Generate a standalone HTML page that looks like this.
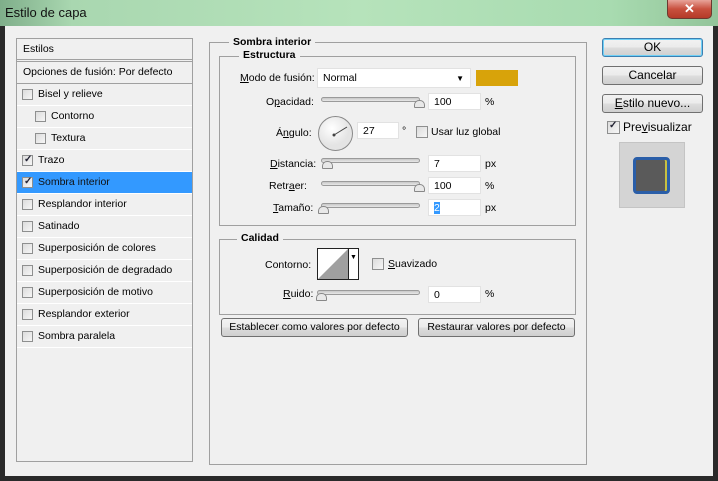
<!DOCTYPE html>
<html><head><meta charset="utf-8"><style>
*{margin:0;padding:0;box-sizing:border-box}
body{width:718px;height:481px;overflow:hidden;background:#2a2a2a;font-family:"Liberation Sans",Tahoma,sans-serif;font-size:10.5px;color:#000;position:relative}
.a{position:absolute}
#title{left:0;top:0;width:718px;height:26px;background:linear-gradient(90deg,#7fae8a 0%,#a9d7b0 10%,#b6e3bb 50%,#a8dbb0 85%,#93c49a 100%);}
#title span{position:absolute;left:5px;top:5px;font-size:13px;color:#111}
#close{left:667px;top:0;width:45px;height:19px;background:linear-gradient(#e8a49a,#c8503e 50%,#b43a28);border:1px solid #6b3a30;border-top:none;border-radius:0 0 5px 5px;color:#fff;text-align:center;font-weight:bold;font-size:13px;line-height:17px}
#body{left:5px;top:26px;width:708px;height:450px;background:#f0f0f0}
.box{position:absolute;border:1px solid #a0a0a0}
.row{position:absolute;left:17px;width:175px;height:22px;border-bottom:1px solid #fff;line-height:21px}
.cb{position:absolute;width:11px;height:11px;border:1px solid #8e8f8f;background:linear-gradient(135deg,#dcdcdc,#f6f6f6)}
.cb.c::after{content:"✓";position:absolute;left:1px;top:-2px;font-size:10px;line-height:12px;color:#223;font-weight:bold}
.lbl{position:absolute;white-space:nowrap}
.btn{position:absolute;border:1px solid #707070;border-radius:3px;background:linear-gradient(#f2f2f2 0%,#ebebeb 50%,#dddddd 51%,#cfcfcf 100%);text-align:center;font-size:12px}
.inp{position:absolute;background:#fff;border:1px solid #e2e2e2;height:17px;line-height:16px;padding-left:5px}
.sl{position:absolute;height:5px;border:1px solid #9a9a9a;border-radius:3px;background:linear-gradient(#c8c8c8,#e8e8e8)}
.thumb{position:absolute;width:11px;height:8px;background:#e8e8e8;border:1px solid #888;border-radius:5px 5px 1px 1px}
u{text-decoration:underline}
b{font-weight:bold}
</style></head><body>
<div id="title" class="a"><span>Estilo de capa</span></div>
<div id="close" class="a">✕</div>
<div id="body" class="a"></div>

<div class="box" style="left:16px;top:38px;width:177px;height:424px;background:#f0f0f0"></div>
<div class="row" style="top:39px;height:23px;border-bottom:3px double #a0a0a0"><span class="lbl" style="left:6px">Estilos</span></div>
<div class="row" style="top:62px;border-bottom:1px solid #a0a0a0"><span class="lbl" style="left:6px">Opciones de fusión: Por defecto</span></div>
<div class="row" style="top:84px"><div class="cb" style="left:5px;top:5px"></div><span class="lbl" style="left:21px">Bisel y relieve</span></div>
<div class="row" style="top:106px"><div class="cb" style="left:18px;top:5px"></div><span class="lbl" style="left:34px">Contorno</span></div>
<div class="row" style="top:128px"><div class="cb" style="left:18px;top:5px"></div><span class="lbl" style="left:34px">Textura</span></div>
<div class="row" style="top:150px"><div class="cb c" style="left:5px;top:5px"></div><span class="lbl" style="left:21px">Trazo</span></div>
<div class="row" style="top:172px;background:#3399ff;color:#111"><div class="cb c" style="left:5px;top:5px"></div><span class="lbl" style="left:21px">Sombra interior</span></div>
<div class="row" style="top:194px"><div class="cb" style="left:5px;top:5px"></div><span class="lbl" style="left:21px">Resplandor interior</span></div>
<div class="row" style="top:216px"><div class="cb" style="left:5px;top:5px"></div><span class="lbl" style="left:21px">Satinado</span></div>
<div class="row" style="top:238px"><div class="cb" style="left:5px;top:5px"></div><span class="lbl" style="left:21px">Superposición de colores</span></div>
<div class="row" style="top:260px"><div class="cb" style="left:5px;top:5px"></div><span class="lbl" style="left:21px">Superposición de degradado</span></div>
<div class="row" style="top:282px"><div class="cb" style="left:5px;top:5px"></div><span class="lbl" style="left:21px">Superposición de motivo</span></div>
<div class="row" style="top:304px"><div class="cb" style="left:5px;top:5px"></div><span class="lbl" style="left:21px">Resplandor exterior</span></div>
<div class="row" style="top:326px"><div class="cb" style="left:5px;top:5px"></div><span class="lbl" style="left:21px">Sombra paralela</span></div>

<div class="box" style="left:209px;top:42px;width:378px;height:423px"></div>
<span class="lbl" style="left:229px;top:36px;background:#f0f0f0;padding:0 4px"><b>Sombra interior</b></span>
<div class="box" style="left:219px;top:56px;width:357px;height:170px"></div>
<span class="lbl" style="left:239px;top:49px;background:#f0f0f0;padding:0 4px"><b>Estructura</b></span>

<span class="lbl" style="left:240px;top:72px"><u>M</u>odo de fusión:</span>
<div class="inp" style="left:317px;top:68px;width:154px;height:20px;line-height:19px">Normal<span style="position:absolute;right:6px;top:0;font-size:8px">▼</span></div>
<div class="a" style="left:476px;top:70px;width:42px;height:16px;background:#d8a30a"></div>

<span class="lbl" style="left:266px;top:96px">O<u>p</u>acidad:</span>
<div class="sl" style="left:321px;top:97px;width:99px"></div>
<div class="thumb" style="left:414px;top:100px"></div>
<div class="inp" style="left:428px;top:93px;width:53px">100</div>
<span class="lbl" style="left:485px;top:96px">%</span>

<span class="lbl" style="left:276px;top:127px">Á<u>n</u>gulo:</span>
<svg class="a" style="left:317px;top:115px" width="37" height="37"><defs><radialGradient id="g" cx="40%" cy="35%"><stop offset="0" stop-color="#fff"/><stop offset="1" stop-color="#e4e4e4"/></radialGradient></defs><circle cx="18.5" cy="18.5" r="17" fill="url(#g)" stroke="#888"/><line x1="17" y1="20" x2="30" y2="12" stroke="#444" stroke-width="1"/><circle cx="17" cy="20" r="1.5" fill="#444"/></svg>
<div class="inp" style="left:357px;top:122px;width:42px">27</div>
<span class="lbl" style="left:402px;top:125px">°</span>
<div class="cb" style="left:416px;top:126px;width:12px;height:12px"></div>
<span class="lbl" style="left:431px;top:126px">Usar luz global</span>

<span class="lbl" style="left:270px;top:158px"><u>D</u>istancia:</span>
<div class="sl" style="left:321px;top:158px;width:99px"></div>
<div class="thumb" style="left:322px;top:161px"></div>
<div class="inp" style="left:428px;top:155px;width:53px">7</div>
<span class="lbl" style="left:485px;top:158px">px</span>

<span class="lbl" style="left:269px;top:180px">Retr<u>a</u>er:</span>
<div class="sl" style="left:321px;top:181px;width:99px"></div>
<div class="thumb" style="left:414px;top:184px"></div>
<div class="inp" style="left:428px;top:177px;width:53px">100</div>
<span class="lbl" style="left:485px;top:180px">%</span>

<span class="lbl" style="left:273px;top:202px"><u>T</u>amaño:</span>
<div class="sl" style="left:321px;top:203px;width:99px"></div>
<div class="thumb" style="left:318px;top:206px"></div>
<div class="inp" style="left:428px;top:199px;width:53px"><span style="background:#3399ff;color:#fff">2</span></div>
<span class="lbl" style="left:485px;top:202px">px</span>

<div class="box" style="left:219px;top:239px;width:357px;height:76px"></div>
<span class="lbl" style="left:237px;top:232px;background:#f0f0f0;padding:0 4px"><b>Calidad</b></span>
<span class="lbl" style="left:265px;top:259px">Contorno:</span>
<div class="a" style="left:317px;top:248px;width:42px;height:32px;border:1px solid #222;background:#fff"><svg width="30" height="30" style="position:absolute;left:0;top:0"><polygon points="0,30 30,0 30,30" fill="#a0a0a0"/></svg><div style="position:absolute;left:30px;top:0;width:1px;height:30px;background:#222"></div><span style="position:absolute;left:32px;top:5px;font-size:7px">▼</span></div>
<div class="cb" style="left:372px;top:258px;width:12px;height:12px"></div>
<span class="lbl" style="left:388px;top:258px"><u>S</u>uavizado</span>
<span class="lbl" style="left:283px;top:288px"><u>R</u>uido:</span>
<div class="sl" style="left:317px;top:290px;width:103px"></div>
<div class="thumb" style="left:316px;top:293px"></div>
<div class="inp" style="left:428px;top:286px;width:53px">0</div>
<span class="lbl" style="left:485px;top:288px">%</span>

<div class="btn" style="left:221px;top:318px;width:187px;height:19px;line-height:17px;font-size:10.5px">Establecer como valores por defecto</div>
<div class="btn" style="left:418px;top:318px;width:157px;height:19px;line-height:17px;font-size:10.5px">Restaurar valores por defecto</div>

<div class="btn" style="left:602px;top:38px;width:101px;height:19px;line-height:17px;border-color:#3c7fb1;box-shadow:inset 0 0 0 1px #6fd0f6">OK</div>
<div class="btn" style="left:602px;top:66px;width:101px;height:19px;line-height:17px">Cancelar</div>
<div class="btn" style="left:602px;top:94px;width:101px;height:19px;line-height:17px"><u>E</u>stilo nuevo...</div>
<div class="cb c" style="left:607px;top:121px;width:13px;height:13px"></div>
<span class="lbl" style="left:623px;top:120px;font-size:12px">Pre<u>v</u>isualizar</span>
<div class="a" style="left:619px;top:142px;width:66px;height:66px;background:#d4d4d4;border:1px solid #c4c4c4"></div>
<div class="a" style="left:633px;top:157px;width:37px;height:37px;background:#5a5a5a;border:3px solid #2a5ea8;border-radius:4px;box-shadow:inset -2px 0 0 #c8c040"></div>
</body></html>
